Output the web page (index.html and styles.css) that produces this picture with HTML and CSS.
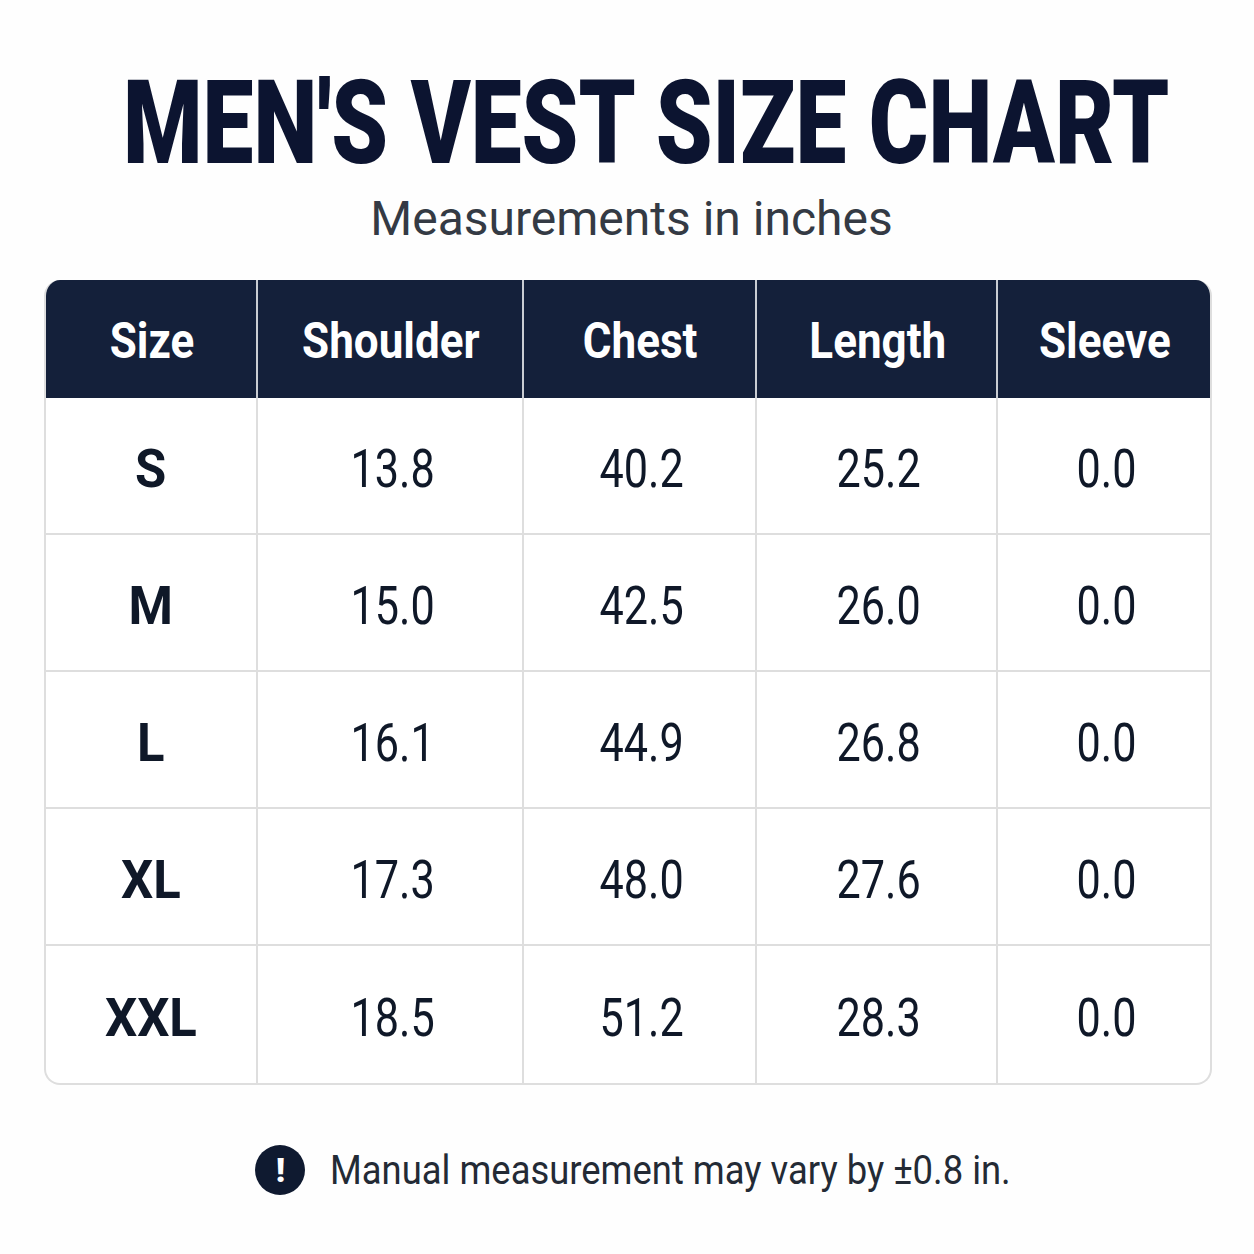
FILE: index.html
```html
<!DOCTYPE html>
<html>
<head>
<meta charset="utf-8">
<link rel="stylesheet" href="styles.css">
</head>
<body>
<div class="page">
  <h1 class="title"><span class="sq">MEN'S VEST SIZE CHART</span></h1>
  <p class="subtitle">Measurements in inches</p>
  <div class="table">
    <div class="row head">
      <div class="cell"><span class="c">Size</span></div>
      <div class="cell"><span class="c">Shoulder</span></div>
      <div class="cell"><span class="c">Chest</span></div>
      <div class="cell"><span class="c">Length</span></div>
      <div class="cell"><span class="c">Sleeve</span></div>
    </div>
    <div class="row">
      <div class="cell size"><span class="c">S</span></div>
      <div class="cell"><span class="c">13.8</span></div>
      <div class="cell"><span class="c">40.2</span></div>
      <div class="cell"><span class="c">25.2</span></div>
      <div class="cell"><span class="c">0.0</span></div>
    </div>
    <div class="row">
      <div class="cell size"><span class="c">M</span></div>
      <div class="cell"><span class="c">15.0</span></div>
      <div class="cell"><span class="c">42.5</span></div>
      <div class="cell"><span class="c">26.0</span></div>
      <div class="cell"><span class="c">0.0</span></div>
    </div>
    <div class="row">
      <div class="cell size"><span class="c">L</span></div>
      <div class="cell"><span class="c">16.1</span></div>
      <div class="cell"><span class="c">44.9</span></div>
      <div class="cell"><span class="c">26.8</span></div>
      <div class="cell"><span class="c">0.0</span></div>
    </div>
    <div class="row">
      <div class="cell size"><span class="c">XL</span></div>
      <div class="cell"><span class="c">17.3</span></div>
      <div class="cell"><span class="c">48.0</span></div>
      <div class="cell"><span class="c">27.6</span></div>
      <div class="cell"><span class="c">0.0</span></div>
    </div>
    <div class="row last">
      <div class="cell size"><span class="c">XXL</span></div>
      <div class="cell"><span class="c">18.5</span></div>
      <div class="cell"><span class="c">51.2</span></div>
      <div class="cell"><span class="c">28.3</span></div>
      <div class="cell"><span class="c">0.0</span></div>
    </div>
  </div>
  <div class="note">
    <span class="icon">!</span>
    <span class="note-text">Manual measurement may vary by ±0.8 in.</span>
  </div>
</div>
</body>
</html>
```

FILE: styles.css
```css
* { box-sizing: border-box; }
html, body { margin: 0; padding: 0; background: #fefefe; }
body { width: 1254px; height: 1254px; font-family: Roboto, "Liberation Sans", sans-serif; color: #0f1a2c; }
.page { padding-top: 68px; display: flex; flex-direction: column; align-items: center; }
.title { margin: 0 0 0 38px; height: 110px; line-height: 110px; font-size: 116px; font-weight: 900; color: #0c1430; letter-spacing: 0; white-space: nowrap; }
.sq { display: inline-block; transform: scaleX(0.783); }
.subtitle { margin: 10px 0 0 9px; height: 60px; line-height: 62px; font-size: 48px; color: #343a44; font-weight: 400; }
.table { margin: 32px 0 0 2px; width: 1168px; border: 2px solid #dedede; border-top: none; border-radius: 16px; overflow: hidden; background: #fff; }
.row { display: grid; grid-template-columns: 212px 266px 233px 241px 1fr; height: 137px; border-bottom: 2px solid #dedede; }
.row.last { border-bottom: none; }
.row.head { height: 118px; background: #14203a; color: #fff; border-bottom: none; }
.cell { display: flex; align-items: center; justify-content: center; border-right: 2px solid #dedede; font-size: 54px; font-weight: 400; color: #0f1828; padding: 5px 0 0 5px; }
.cell:last-child { border-right: none; }
.head .cell { color: #fff; font-weight: 700; font-size: 50px; border-right-color: #c9ccd2; padding: 4px 0 0 2px; }
.head .c { transform: scaleX(0.88); }
.size { font-weight: 700; padding-left: 0; }
.c { display: inline-block; transform: scaleX(0.80); }
.size .c { transform: scaleX(0.94); }
.note { margin-top: 60px; display: flex; align-items: center; gap: 25px; margin-left: 13px; }
.icon { width: 50px; height: 50px; border-radius: 50%; background: #0f1a30; color: #fff; font-weight: 900; font-size: 34px; display: flex; align-items: center; justify-content: center; }
.note-text { font-size: 40px; color: #232a35; display: inline-block; transform: scaleX(0.91); transform-origin: left center; margin-right: -67px; }
```
